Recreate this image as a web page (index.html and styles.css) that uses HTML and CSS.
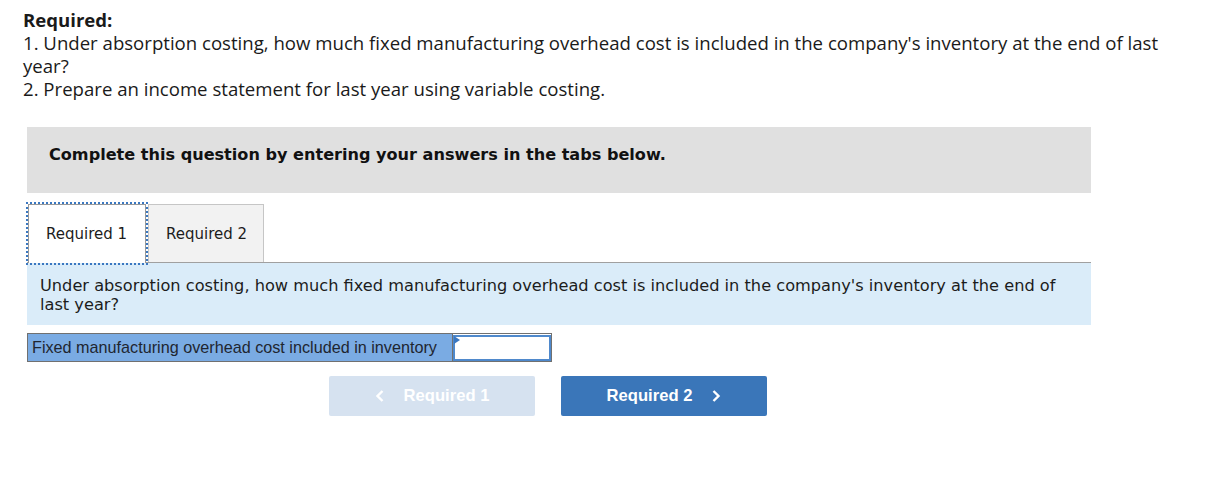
FILE: index.html
```html
<!DOCTYPE html>
<html lang="en">
<head>
  <meta charset="UTF-8">
  <title>Required</title>
  <link rel="stylesheet" href="styles.css">
</head>
<body>
  <div class="required">
    <strong>Required:</strong><br>
    1. Under absorption costing, how much fixed manufacturing overhead cost is included in the company's inventory at the end of last year?<br>
    2. Prepare an income statement for last year using variable costing.
  </div>

  <div class="question">
    <div class="instructions">Complete this question by entering your answers in the tabs below.</div>

    <div class="tabs">
      <div class="tab active">Required 1</div>
      <div class="tab">Required 2</div>
    </div>

    <div class="tab-panel">
      Under absorption costing, how much fixed manufacturing overhead cost is included in the company's inventory at the end of last year?
    </div>

    <div class="answer-row">
      <div class="answer-label">Fixed manufacturing overhead cost included in inventory</div>
      <div class="answer-input"><span class="marker"></span></div>
    </div>

    <div class="nav">
      <button class="nav-btn prev" disabled>
        <svg width="10" height="14" viewBox="0 0 10 14"><path d="M7.5 2 L2.5 7 L7.5 12" fill="none" stroke="currentColor" stroke-width="2.4"/></svg>
        Required 1
      </button>
      <button class="nav-btn next">
        Required 2
        <svg width="10" height="14" viewBox="0 0 10 14"><path d="M2.5 2 L7.5 7 L2.5 12" fill="none" stroke="currentColor" stroke-width="2.4"/></svg>
      </button>
    </div>
  </div>
</body>
</html>
```

FILE: styles.css
```css
body {
  margin: 0;
  padding: 8px 23px 0;
  background: #fff;
  color: #222;
}
.required {
  font-family: "Open Sans", "Liberation Sans", sans-serif;
  font-size: 18.6px;
  line-height: 23px;
  color: #1a1a1a;
  width: 1140px;
}
.required strong {
  font-weight: 700;
}
.question {
  margin: 27px 0 0 4px;
  width: 1064px;
}
.instructions {
  background: #e0e0e0;
  height: 66px;
  box-sizing: border-box;
  padding: 17px 22px 0;
  font-family: "DejaVu Sans", Verdana, sans-serif;
  font-weight: bold;
  font-size: 16.1px;
  line-height: 22px;
  color: #111;
}
.tabs {
  display: flex;
  margin-top: 10px;
  border-bottom: 1px solid #a0a0a0;
  height: 59px;
}
.tab {
  font-family: "DejaVu Sans", Verdana, sans-serif;
  font-size: 15px;
  color: #1c1c1c;
  border: 1px solid #c6c6c6;
  border-bottom: none;
  background: #f2f2f2;
  padding: 0 16px 0 17px;
  display: flex;
  align-items: center;
  margin-top: 1px;
}
.tab.active {
  background: #fff;
  border: 1px solid #999;
  border-bottom: none;
  outline: 2px dotted #3a77c0;
  outline-offset: 0;
  margin: 1px 2px -1px 1px;
  padding: 0 18px 0 17px;
  height: 59px;
  box-sizing: border-box;
}
.tab-panel {
  background: #daecf9;
  font-family: "DejaVu Sans", Verdana, sans-serif;
  font-size: 16.2px;
  line-height: 19px;
  color: #1c1c1c;
  padding: 13px 26px 14px 13px;
  height: 62px;
  box-sizing: border-box;
}
.answer-row {
  display: flex;
  margin-top: 8px;
  width: 525px;
  height: 29px;
  border: 1px solid #707070;
  box-sizing: border-box;
}
.answer-label {
  flex: 1;
  background: #7aabe3;
  font-family: "Liberation Sans", Arial, sans-serif;
  font-size: 16.2px;
  color: #1f2630;
  padding: 0 4px;
  line-height: 27px;
  border-right: 1px solid #707070;
  white-space: nowrap;
}
.answer-input {
  position: relative;
  width: 98px;
  background: #fff;
  border: 2px solid #4f89cc;
  box-sizing: border-box;
  margin: 1px 0 0 0;
}
.marker {
  position: absolute;
  top: -1px;
  left: -1px;
  width: 0;
  height: 0;
  border-top: 4px solid transparent;
  border-bottom: 4px solid transparent;
  border-left: 6px solid #3a77c0;
}
.nav {
  display: flex;
  gap: 26px;
  margin: 14px 0 0 302px;
}
.nav-btn {
  width: 206px;
  height: 40px;
  border: none;
  border-radius: 2px;
  font-family: "Liberation Sans", Arial, sans-serif;
  font-weight: bold;
  font-size: 16.6px;
  color: #fff;
  display: flex;
  align-items: center;
  justify-content: center;
  gap: 19px;
  cursor: pointer;
}
.nav-btn.prev {
  background: #d6e2f0;
  cursor: default;
}
.nav-btn.next {
  background: #3a76b9;
}
```
